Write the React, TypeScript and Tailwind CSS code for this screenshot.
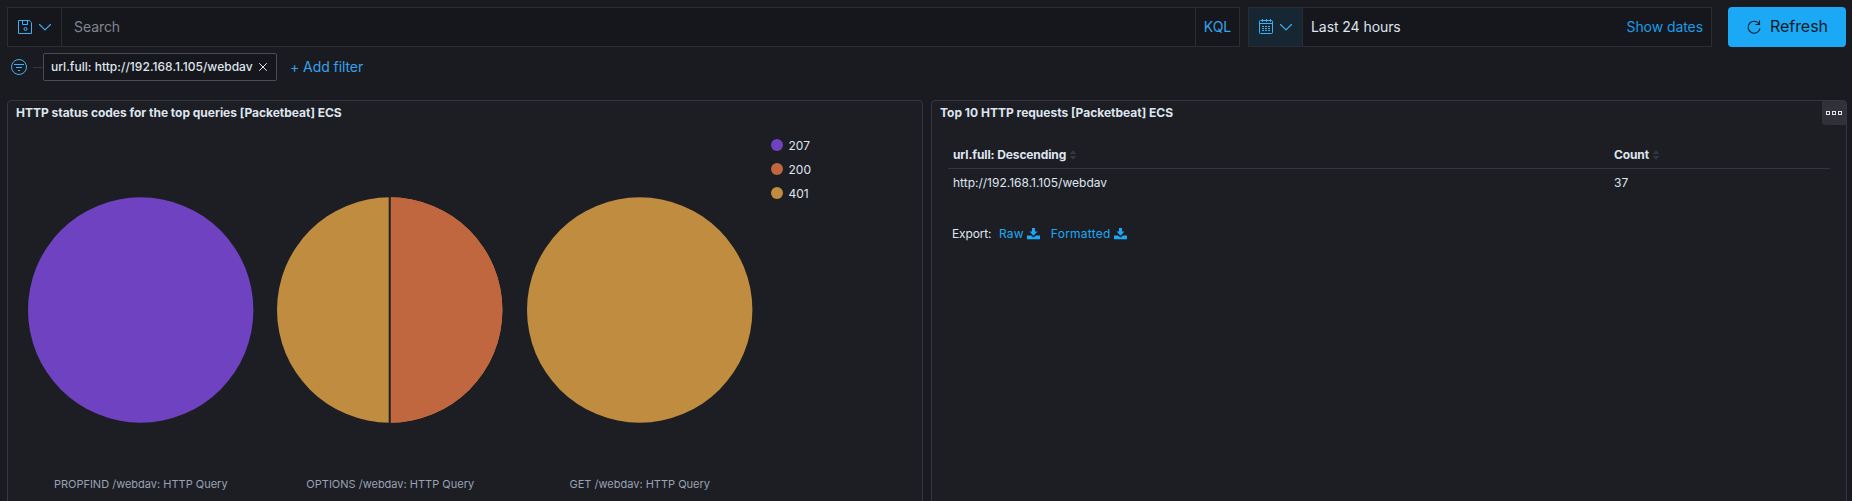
import React from "react";

const BLUE = "#3fb0f5";

function Chevron() {
  return (
    <svg width="16" height="16" viewBox="0 0 16 16" fill="none" stroke={BLUE} strokeWidth="1.1" strokeLinecap="round" strokeLinejoin="round">
      <path d="M2.5 5.5 8 10.8l5.500-5.300" />
    </svg>
  );
}

function SaveIcon() {
  return (
    <svg width="16" height="16" viewBox="0 0 16 16" fill="none" stroke={BLUE} strokeWidth="1">
      <path d="M1.500 1.500h10.800l2.200 2.200v10.800h-13zM5.500 1.500v4h5v-4" />
      <circle cx="8.500" cy="10" r="1.500" />
    </svg>
  );
}

function CalendarIcon() {
  return (
    <svg width="16" height="16" viewBox="0 0 16 16" fill="none" stroke={BLUE} strokeWidth="1">
      <rect x="1.500" y="1.500" width="13" height="13" rx="1" />
      <path d="M1.500 4.500h13M4.500 0v3M8.500 0v3M12.500 0v3" />
      <path d="M4 7.500h8M4 9.500h8M4 11.500h8" strokeDasharray="2 1" />
    </svg>
  );
}

function FilterIcon() {
  return (
    <svg width="16" height="16" viewBox="0 0 16 16" fill="none" stroke={BLUE} strokeWidth="1">
      <circle cx="8" cy="8" r="7.500" />
      <path d="M3 5.500h10M5 8.500h6M7 11.500h2" />
    </svg>
  );
}

function RefreshIcon() {
  return (
    <svg width="16" height="16" viewBox="0 0 16 16" fill="none" stroke="#0b1a26" strokeWidth="1.100">
      <path d="M13.300 5.200A6 6 0 1 0 14 9.300" />
      <path d="M13.500 1.500v4h-4" />
    </svg>
  );
}

function Sort() {
  return (
    <svg width="8" height="10" viewBox="0 0 8 10" fill="#343741">
      <path d="M0.500 4 4 0.300 7.500 4zM0.500 6 4 9.700 7.500 6z" />
    </svg>
  );
}

function Download() {
  return (
    <svg width="13" height="12" viewBox="0 0 13 12" fill="#1ba9f5">
      <path d="M5 0h3v3.500h2.500L6.500 7.800 2.500 3.500H5z" />
      <path d="M0 7.500h4l2.500 2 2.500-2h4V11.300H0z" />
    </svg>
  );
}

function Pie({ left, right, label }: { left: string; right?: string; label: string }) {
  return (
    <div className="flex w-[249.500px] flex-col items-center">
      <svg width="228" height="228" viewBox="0 0 228 228">
        <circle cx="113.700" cy="114" r="112.700" fill={left} />
        {right && (
          <>
            <path d="M113.700 1.300A112.700 112.700 0 0 1 113.700 226.700z" fill={right} />
            <path d="M113.700 0v228" stroke="#1d1e24" strokeWidth="2" />
          </>
        )}
      </svg>
      <div className="mt-[52px] text-[11px] leading-4 whitespace-nowrap text-[#98a2b3]">{label}</div>
    </div>
  );
}

const legend = [
  ["207", "#6f42c1"],
  ["200", "#c0673f"],
  ["401", "#bf8c40"],
];

export default function App() {
  return (
    <div className="h-[501px] w-[1852px] overflow-hidden bg-[#1a1b20] pt-[7px] pl-[7px] font-['Inter',sans-serif] text-[12px] text-[#dfe5ef]">
      <div className="flex h-10 text-[14px] tracking-[-0.005em]">
        <div className="flex w-[1233px] border border-[#2c2d31] bg-[#16171c]">
          <div className="flex w-[54px] items-center gap-1 border-r border-[#2c2d31] pl-[9px]">
            <SaveIcon />
            <Chevron />
          </div>
          <div className="flex flex-1 items-center pb-[2px] pl-3 text-[#81858f]">Search</div>
          <div className="flex w-[44px] items-center justify-center border-l border-[#2c2d31] pb-[2px] text-[#36a2ef]">KQL</div>
        </div>
        <div className="ml-2 flex w-[464px] border border-[#2c2d31] bg-[#16171c]">
          <div className="flex w-[54px] items-center gap-1 border-r border-[#2c2d31] bg-[#172633] pl-[9px]">
            <CalendarIcon />
            <Chevron />
          </div>
          <div className="flex flex-1 items-center justify-between px-2 pb-[2px]">
            <span>Last 24 hours</span>
            <span className="text-[#1b9bea]">Show dates</span>
          </div>
        </div>
        <button className="ml-4 flex w-[118px] items-center justify-center gap-2 rounded bg-[#1ba9f5] text-[16px] text-[#0b1a26]">
          <RefreshIcon />
          <span className="pb-[2px]">Refresh</span>
        </button>
      </div>

      <div className="mt-[6px] flex h-7 items-center">
        <div className="ml-1"><FilterIcon /></div>
        <div className="ml-[6px] h-px w-[10px] bg-[#343741]" />
        <div className="flex h-7 w-[234px] items-center justify-between rounded-[2px] border border-[#4a4c55] bg-[#16171c] pr-2 pl-[7px] font-medium tracking-[0.03px] whitespace-nowrap">
          <span>url.full: http://192.168.1.105/webdav</span>
          <svg width="10" height="10" viewBox="0 0 10 10" stroke="#dfe5ef" strokeWidth="1">
            <path d="M1.200 1.200l7.600 7.600M8.800 1.200l-7.600 7.600" />
          </svg>
        </div>
        <span className="ml-[13px] pb-px text-[14px] tracking-[-0.005em] text-[#36a2ef]">+ Add filter</span>
      </div>

      <div className="mt-[19px] flex h-[420px] gap-2">
        <section className="w-[916px] rounded-t border border-[#343741] bg-[#1d1e24]">
          <h2 className="h-6 pl-2 text-[12px] leading-6 font-bold tracking-[-0.02px]">HTTP status codes for the top queries [Packetbeat] ECS</h2>
          <div className="flex">
            <div className="flex pt-[71px] pl-[8px]">
              <Pie left="#6f42c1" label="PROPFIND /webdav: HTTP Query" />
              <Pie left="#bf8c40" right="#c0673f" label="OPTIONS /webdav: HTTP Query" />
              <Pie left="#bf8c40" label="GET /webdav: HTTP Query" />
            </div>
            <div className="pt-2 pl-[6px]">
              {legend.map(([name, color]) => (
                <div key={name} className="flex h-6 items-center gap-[6px]">
                  <svg width="12" height="12"><circle cx="6" cy="6" r="6" fill={color} /></svg>
                  <span className="pt-[2px]">{name}</span>
                </div>
              ))}
            </div>
          </div>
        </section>

        <section className="w-[916px] rounded-t border border-[#343741] bg-[#1d1e24]">
          <div className="flex h-6 justify-between">
            <h2 className="pl-2 text-[12px] leading-6 font-bold">Top 10 HTTP requests [Packetbeat] ECS</h2>
            <div className="flex w-6 items-center justify-center gap-[2px] rounded-bl bg-[#313237]">
              <i className="h-1 w-1 border border-[#dfe5ef]" />
              <i className="h-1 w-1 border border-[#dfe5ef]" />
              <i className="h-1 w-1 border border-[#dfe5ef]" />
            </div>
          </div>
          <div className="mt-[14px] ml-4 w-[882px]">
            <div className="flex h-[30px] items-center border-b border-[#343741] pt-[2px] pl-[5px] font-bold tracking-[-0.12px]">
              <div className="flex w-[661px] items-center gap-[3px]">url.full: Descending <Sort /></div>
              <div className="flex items-center gap-[3px]">Count <Sort /></div>
            </div>
            <div className="flex h-[28px] items-center pl-[5px]">
              <div className="w-[661px]">http://192.168.1.105/webdav</div>
              <div>37</div>
            </div>
          </div>
          <div className="mt-[29px] ml-5 flex h-4 items-center">
            <span className="w-[39px] tracking-[-0.15px]">Export:</span>
            <span className="ml-2 flex items-center gap-[3px] tracking-[0.200px] text-[#1ba9f5]">Raw <Download /></span>
            <span className="ml-[11px] flex items-center gap-[3px] tracking-[0.250px] text-[#1ba9f5]">Formatted <Download /></span>
          </div>
        </section>
      </div>
    </div>
  );
}
